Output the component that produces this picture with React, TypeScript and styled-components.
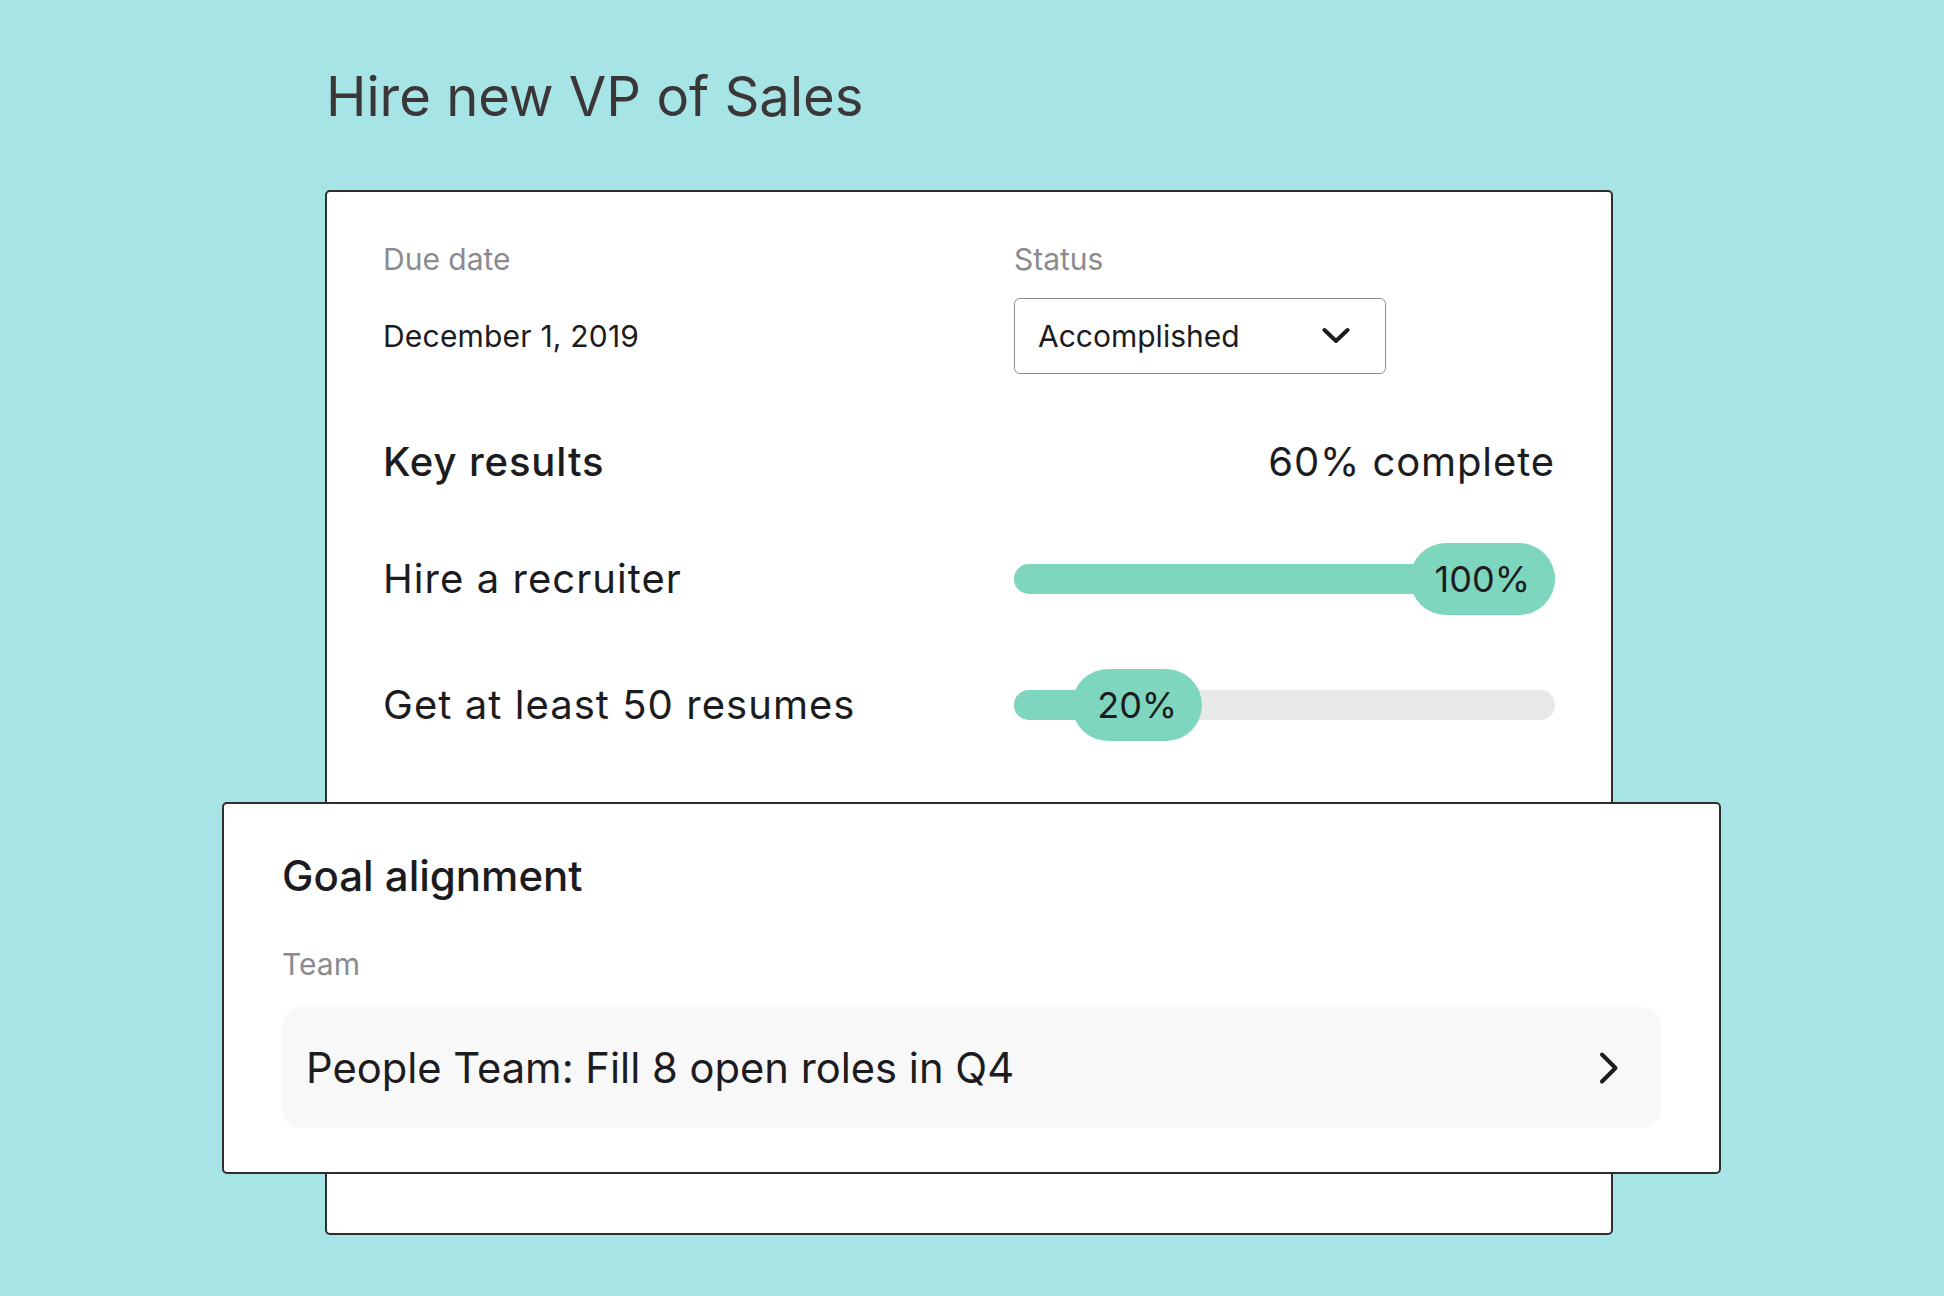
import React from "react";
import styled, { createGlobalStyle } from "styled-components";

const GlobalStyle = createGlobalStyle`
  html, body {
    margin: 0;
    padding: 0;
    background: #a6e4e6;
  }
  body {
    font-family: Inter, "Noto Sans", sans-serif;
    color: #1c1c1e;
  }
  * { box-sizing: border-box; }
`;

const Page = styled.div`
  min-height: 1296px;
  padding-top: 64px;
`;

const Title = styled.h1`
  margin: 0 0 62px 326px;
  font-size: 54.4px;
  line-height: 64px;
  font-weight: 400;
  color: #3b3739;
`;

const Scene = styled.div`
  position: relative;
  margin-left: 325px;
  width: 1288px;
`;

const Card = styled.section`
  background: #ffffff;
  border: 2px solid #2e2e2e;
  border-radius: 5px;
`;

const MainCard = styled(Card)`
  height: 1045px;
  padding: 49px 56px 0 56px;
`;

const AlignCard = styled(Card)`
  position: absolute;
  left: -103px;
  top: 612px;
  width: 1499px;
  height: 372px;
  padding: 47px 58px 0 58px;
`;

const FieldGrid = styled.div`
  display: grid;
  grid-template-columns: 631px 1fr;
  row-gap: 21px;
  align-items: center;
`;

const Label = styled.div`
  font-size: 30px;
  line-height: 36px;
  color: #8b8b8f;
`;

const Value = styled.div`
  font-size: 30px;
  line-height: 36px;
  letter-spacing: 0.2px;
  color: #1c1c1e;
`;

const Select = styled.div`
  width: 372px;
  height: 76px;
  border: 1.5px solid #8d8d8d;
  border-radius: 6px;
  display: flex;
  align-items: center;
  justify-content: space-between;
  padding: 0 35px 0 23px;
  font-size: 30px;
  line-height: 36px;
  color: #1c1c1e;
`;

const KRHeader = styled.div`
  margin-top: 64px;
  display: flex;
  justify-content: space-between;
  align-items: center;
`;

const Heading = styled.h2<{ $weight?: number }>`
  margin: 0;
  font-size: 40px;
  line-height: 48px;
  letter-spacing: 0.9px;
  font-weight: ${(p) => p.$weight ?? 500};
  color: #1c1c1e;
`;

const KRList = styled.div`
  margin-top: 57px;
  display: flex;
  flex-direction: column;
  gap: 54px;
`;

const KRRow = styled.div`
  display: grid;
  grid-template-columns: 631px 1fr;
  align-items: center;
  height: 72px;
`;

const KRName = styled.div`
  font-size: 40px;
  line-height: 48px;
  letter-spacing: 1.05px;
  color: #1c1c1e;
`;

const Track = styled.div`
  position: relative;
  height: 30px;
  border-radius: 15px;
  background: #e8e8ea;
`;

const Fill = styled.div`
  height: 100%;
  border-radius: 15px;
  background: #7dd6bd;
`;

const Badge = styled.div<{ $full: boolean }>`
  position: absolute;
  top: 50%;
  height: 72px;
  padding: 0 25px;
  border-radius: 36px;
  background: #7dd6bd;
  display: flex;
  align-items: center;
  font-size: 36px;
  line-height: 44px;
  color: #1c1c1e;
  white-space: nowrap;
  ${(p) =>
    p.$full
      ? "right: 0; transform: translateY(-50%);"
      : "transform: translate(-50%, -50%);"}
`;

const GoalTitle = styled.h2`
  margin: 0;
  font-size: 42px;
  line-height: 50px;
  font-weight: 500;
  color: #1c1c1e;
`;

const TeamLabel = styled(Label)`
  margin-top: 45px;
`;

const LinkRow = styled.div`
  margin-top: 25px;
  height: 121px;
  border-radius: 20px;
  background: #f8f8f8;
  display: flex;
  align-items: center;
  justify-content: space-between;
  padding: 0 42px 0 24px;
  font-size: 41.7px;
  line-height: 50px;
  color: #1c1c1e;
`;

const ChevronDown = () => (
  <svg width="28" height="18" viewBox="0 0 28 18" fill="none">
    <polyline
      points="2.5,3 14,14 25.5,3"
      stroke="#1c1c1e"
      strokeWidth="4"
      strokeLinecap="round"
      strokeLinejoin="round"
    />
  </svg>
);

const ChevronRight = () => (
  <svg width="20" height="34" viewBox="0 0 20 34" fill="none">
    <polyline
      points="3,3.5 16.5,17 3,30.5"
      stroke="#1c1c1e"
      strokeWidth="4"
      strokeLinecap="round"
      strokeLinejoin="round"
    />
  </svg>
);

const results = [
  { name: "Hire a recruiter", pct: 100 },
  { name: "Get at least 50 resumes", pct: 20 },
];

export default function App() {
  return (
    <>
      <GlobalStyle />
      <Page>
        <Title>Hire new VP of Sales</Title>
        <Scene>
          <MainCard>
            <FieldGrid>
              <Label>Due date</Label>
              <Label>Status</Label>
              <Value>December 1, 2019</Value>
              <Select>
                <span>Accomplished</span>
                <ChevronDown />
              </Select>
            </FieldGrid>
            <KRHeader>
              <Heading>Key results</Heading>
              <Heading $weight={400}>60% complete</Heading>
            </KRHeader>
            <KRList>
              {results.map((r) => (
                <KRRow key={r.name}>
                  <KRName>{r.name}</KRName>
                  <Track>
                    <Fill style={{ width: `${r.pct}%` }} />
                    <Badge
                      $full={r.pct >= 100}
                      style={r.pct >= 100 ? undefined : { left: `calc(${r.pct}% + 15px)` }}
                    >
                      {r.pct}%
                    </Badge>
                  </Track>
                </KRRow>
              ))}
            </KRList>
          </MainCard>
          <AlignCard>
            <GoalTitle>Goal alignment</GoalTitle>
            <TeamLabel>Team</TeamLabel>
            <LinkRow>
              <span>People Team: Fill 8 open roles in Q4</span>
              <ChevronRight />
            </LinkRow>
          </AlignCard>
        </Scene>
      </Page>
    </>
  );
}
